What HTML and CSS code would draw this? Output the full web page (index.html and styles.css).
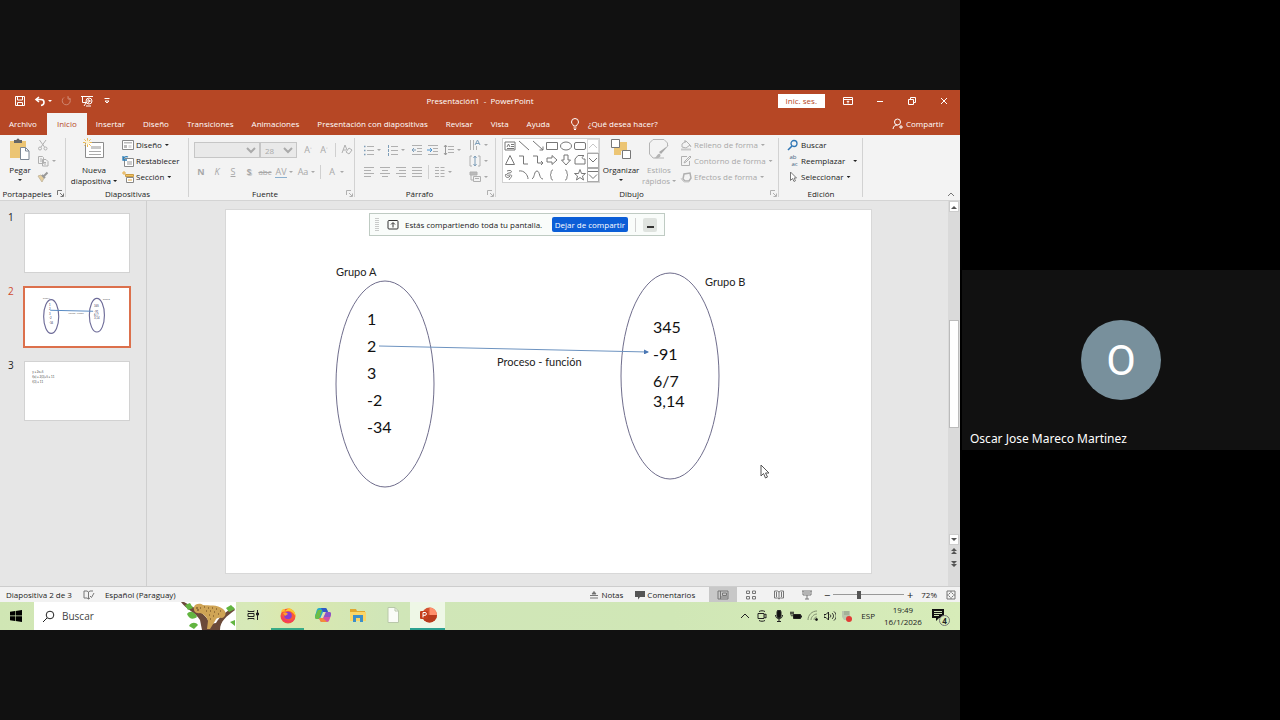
FILE: index.html
```html
<!DOCTYPE html>
<html lang="es">
<head>
<meta charset="utf-8">
<title>Presentación1 - PowerPoint</title>
<link rel="stylesheet" href="styles.css">
</head>
<body>
<main class="stage">
<div class="desktop">

<header class="titlebar">
  <div class="quick">
    <button aria-label="Guardar"><svg width="12" height="12" viewBox="0 0 12 12"><path d="M1.500 1.500h9v9h-9zM3.500 1.500v3.500h5V1.500M3.500 10.500V7.500h5v3" /></svg></button>
    <button aria-label="Deshacer"><svg width="12" height="12" viewBox="0 0 12 12"><path d="M5 2L2 4.500 5 7M2 4.500h5c4 0 4 5 0 6" stroke-width="1.600"/></svg></button>
    <i class="caret light"></i>
    <button aria-label="Rehacer" class="faded"><svg width="12" height="12" viewBox="0 0 12 12"><path d="M4 2.500a4 4 0 1 0 4.500 0M8 1v3h3"/></svg></button>
    <button aria-label="Presentación" class="show"><svg width="14" height="12" viewBox="0 0 14 12"><path d="M1 1.500h12M2.500 1.500v6h4M4 11l2-3"/><circle cx="9" cy="6" r="3"/><path d="M8 4.500l2.500 1.500L8 7.500zM6 11h5"/></svg></button>
    <button aria-label="Personalizar"><svg width="10" height="10" viewBox="0 0 10 10"><path d="M2.500 2.500h5M3 5h4L5 7z"/></svg></button>
  </div>
  <h1>Presentación1&nbsp; -&nbsp; PowerPoint</h1>
  <div class="window-tools">
    <button class="signin">Inic. ses.</button>
    <button aria-label="Opciones de cinta"><svg width="12" height="12" viewBox="0 0 12 12"><path d="M1.500 2.500h9v7h-9zM1.500 4.500h9M6 8.500V6M4.800 7L6 5.800 7.200 7"/></svg></button>
    <button aria-label="Minimizar"><svg width="12" height="12" viewBox="0 0 12 12"><path d="M3 6.500h6"/></svg></button>
    <button aria-label="Restaurar"><svg width="12" height="12" viewBox="0 0 12 12"><path d="M2.500 4.500h5v5h-5zM4.500 4.500v-2h5v5h-2"/></svg></button>
    <button aria-label="Cerrar"><svg width="12" height="12" viewBox="0 0 12 12"><path d="M3 3l6 6M9 3L3 9"/></svg></button>
  </div>
</header>

<nav class="tabs">
  <button>Archivo</button><button class="active">Inicio</button><button>Insertar</button><button>Diseño</button><button>Transiciones</button><button>Animaciones</button><button>Presentación con diapositivas</button><button>Revisar</button><button>Vista</button><button>Ayuda</button>
  <button class="tell"><svg width="10" height="12" viewBox="0 0 10 12"><path d="M3.500 8C3.500 6.500 1.500 6 1.500 4a3.500 3.500 0 0 1 7 0c0 2-2 2.500-2 4zM3.500 10h3M4 11.500h2"/></svg>¿Qué desea hacer?</button>
  <button class="share"><svg width="12" height="12" viewBox="0 0 12 12"><circle cx="5.500" cy="4" r="3"/><path d="M1 11c.5-3 2-4 4.500-4M9 7v4M7 9h4"/></svg>Compartir</button>
</nav>

<section class="ribbon">
  <div class="group g-clip">
    <div class="tools">
      <button class="big"><svg width="22" height="22" viewBox="0 0 22 22"><path d="M1 3h16v17H1z" fill="#ecc574"/><path d="M5 5V2h2.500a1.500 1.500 0 0 1 3 0H13v3z" fill="#666"/><path d="M11.500 9.500h5l3.500 3.500v8.500h-8.500z" fill="#fff" stroke="#7c8794"/><path d="M16.500 9.500V13H20" fill="none" stroke="#7c8794"/></svg><span>Pegar</span><i class="caret"></i></button>
      <div class="stack dim">
        <button aria-label="Cortar"><svg width="12" height="12" viewBox="0 0 12 12"><path d="M2.500 1l5 7M9 1L4 8"/><circle cx="3" cy="9.500" r="1.500"/><circle cx="8.500" cy="9.500" r="1.500"/></svg></button>
        <button aria-label="Copiar"><svg width="12" height="12" viewBox="0 0 12 12"><path d="M1.500 1.500h4l1 1v6h-5zM5.500 4.500h3.500l2 2v4.500H5.500zM3 4h2M3 6h2M7 7.500h2M7 9h2"/></svg><i class="caret"></i></button>
        <button aria-label="Copiar formato"><svg width="12" height="12" viewBox="0 0 12 12"><path d="M1 5l3-1 3 3-2 4z" fill="#e7cf9d" stroke="#c8bba2"/><path d="M5 4l3 3M7 5l3.500-3.500" stroke="#999" stroke-width="2"/></svg></button>
      </div>
    </div>
    <h2>Portapapeles</h2><button class="launcher" aria-label="Opciones de Portapapeles"><svg width="7" height="7" viewBox="0 0 7 7"><path d="M.5 5V.5H5M3 3l3 3M6.500 3.500v3h-3"/></svg></button>
  </div>

  <div class="group g-slides">
    <div class="tools">
      <button class="big"><svg width="22" height="22" viewBox="0 0 22 22"><path d="M2.500 4.500h18v15h-18z" fill="#fff" stroke="#8c8c8c"/><path d="M8 8h10v3H8z" fill="#c9c9c9"/><path d="M6 13.500h12M6 16.500h12" stroke="#aaa"/><path d="M4.500 0v9M0 4.500h9M1.300 1.300l6.400 6.400M7.700 1.300L1.300 7.700" stroke="#ebb954"/><circle cx="4.500" cy="4.500" r="2" fill="#fff3cf"/></svg><span>Nueva</span><span>diapositiva <i class="caret"></i></span></button>
      <div class="stack">
        <button><svg width="12" height="12" viewBox="0 0 12 12"><path d="M.5 1.500h11v9H.5z" fill="#fff" stroke="#888"/><path d="M2 3h8v1.500H2zM2 6h3v3H2z" fill="#bbb" stroke="none"/><path d="M6.500 6h3v3h-3z" fill="#ddd" stroke="none"/></svg>Diseño<i class="caret"></i></button>
        <button><svg width="12" height="12" viewBox="0 0 12 12"><path d="M2.500 3.500h9v8h-9z" fill="#fff" stroke="#888"/><path d="M5 6h5v4H5z" fill="#ccc" stroke="none"/><path d="M1 5C1 2 4 1 6 2M1 1v4h4" stroke="#2b7cb5" stroke-width="1.300"/></svg>Restablecer</button>
        <button><svg width="12" height="12" viewBox="0 0 12 12"><path d="M3.500 3.500h8v2h-8z" fill="#f0c15f" stroke="#c99b45"/><path d="M4.500 6.500h7v5h-7z" fill="#fff" stroke="#888"/><path d="M0 2h4M2 0v4M6 9h4" stroke="#e6ad45"/></svg>Sección<i class="caret"></i></button>
      </div>
    </div>
    <h2>Diapositivas</h2>
  </div>

  <div class="group g-font">
    <div class="rows dim">
      <div class="row">
        <select class="face" disabled aria-label="Fuente"><option></option></select><select class="size" disabled aria-label="Tamaño"><option>28</option></select>
        <button class="cell">A<sup>˄</sup></button><button class="cell">A<sup>˅</sup></button><i class="bar"></i>
        <button class="cell" aria-label="Borrar formato"><svg width="12" height="12" viewBox="0 0 12 12"><path d="M1 9l3-8 2 5M2 6h3M5 8l3-4 3 2-3 4z"/></svg></button>
      </div>
      <div class="row">
        <button class="cell"><b>N</b></button><button class="cell"><em>K</em></button><button class="cell"><u>S</u></button><button class="cell"><b class="shadow">S</b></button><button class="cell"><s>abc</s></button><button class="cell"><span class="spacing">AV</span></button><i class="caret"></i><button class="cell">Aa</button><i class="caret"></i><i class="bar"></i><button class="cell">A</button><i class="caret"></i>
      </div>
    </div>
    <h2>Fuente</h2><button class="launcher dim" aria-label="Opciones de Fuente"><svg width="7" height="7" viewBox="0 0 7 7"><path d="M.5 5V.5H5M3 3l3 3M6.500 3.500v3h-3"/></svg></button>
  </div>

  <div class="group g-par">
    <div class="tools dim">
      <div class="rows">
        <div class="row">
          <button class="cell" aria-label="Viñetas"><svg width="12" height="12" viewBox="0 0 12 12"><path d="M4 2.500h7M4 6.500h7M4 10.500h7"/><path d="M1 2.500h1.500M1 6.500h1.500M1 10.500h1.500" stroke="#7d9db8" stroke-width="1.500"/></svg></button><i class="caret"></i>
          <button class="cell" aria-label="Numeración"><svg width="12" height="12" viewBox="0 0 12 12"><path d="M4 2.500h7M4 6.500h7M4 10.500h7"/><path d="M1.500 1v3M1.500 5v3M1.500 9v3" stroke="#7d9db8"/></svg></button><i class="caret"></i>
          <button class="cell" aria-label="Reducir sangría"><svg width="12" height="12" viewBox="0 0 12 12"><path d="M1 1.500h10M6 4.500h5M6 7.500h5M1 10.500h10"/><path d="M5 6H1M3 4L1 6l2 2" stroke="#7d9db8"/></svg></button>
          <button class="cell" aria-label="Aumentar sangría"><svg width="12" height="12" viewBox="0 0 12 12"><path d="M1 1.500h10M6 4.500h5M6 7.500h5M1 10.500h10"/><path d="M0 6h4M3 4l2 2-2 2" stroke="#4e95cf"/></svg></button>
          <button class="cell" aria-label="Interlineado"><svg width="12" height="12" viewBox="0 0 12 12"><path d="M5 2.500h6M5 5.500h6M5 8.500h6"/><path d="M2.500 1v10M1 3l1.500-2L4 3M1 9l1.500 2L4 9" stroke="#999"/></svg></button><i class="caret"></i>
        </div>
        <div class="row">
          <button class="cell" aria-label="Izquierda"><svg width="12" height="12" viewBox="0 0 12 12"><path d="M1 1.500h10M1 4.500h7M1 7.500h10M1 10.500h7"/></svg></button>
          <button class="cell" aria-label="Centrar"><svg width="12" height="12" viewBox="0 0 12 12"><path d="M1 1.500h10M3 4.500h6M1 7.500h10M3 10.500h6"/></svg></button>
          <button class="cell" aria-label="Derecha"><svg width="12" height="12" viewBox="0 0 12 12"><path d="M1 1.500h10M4 4.500h7M1 7.500h10M4 10.500h7"/></svg></button>
          <button class="cell" aria-label="Justificar"><svg width="12" height="12" viewBox="0 0 12 12"><path d="M1 1.500h10M1 4.500h10M1 7.500h10M1 10.500h10"/></svg></button>
          <i class="bar"></i>
          <button class="cell" aria-label="Columnas"><svg width="12" height="12" viewBox="0 0 12 12"><path d="M1 1.500h4M1 4.500h4M1 7.500h4M1 10.500h4M6.500 1.500h4M6.500 4.500h4M6.500 7.500h4M6.500 10.500h4"/></svg></button><i class="caret"></i>
        </div>
      </div>
      <div class="stack">
        <button aria-label="Dirección del texto"><svg width="12" height="12" viewBox="0 0 12 12"><path d="M1.500 1v10M4.500 1v10M7.500 7v4"/><path d="M6 6l2.500-5L11 6M7 4.500h3" stroke="#7d9db8"/></svg><i class="caret"></i></button>
        <button aria-label="Alinear texto"><svg width="12" height="12" viewBox="0 0 12 12"><path d="M3 1H1v10h2M9 1h2v10H9"/><path d="M6 1v10M4.500 3L6 1l1.500 2M4.500 9L6 11l1.500-2" stroke="#7d9db8"/></svg><i class="caret"></i></button>
        <button aria-label="SmartArt"><svg width="12" height="12" viewBox="0 0 12 12"><path d="M1 1h7v3H1z" fill="#bbb"/><path d="M4.500 5.500h7v5h-7zM2 4v5h2M6 7.500h4"/></svg><i class="caret"></i></button>
      </div>
    </div>
    <h2>Párrafo</h2><button class="launcher dim" aria-label="Opciones de Párrafo"><svg width="7" height="7" viewBox="0 0 7 7"><path d="M.5 5V.5H5M3 3l3 3M6.500 3.500v3h-3"/></svg></button>
  </div>

  <div class="group g-draw">
    <div class="tools">
      <div class="gallery">
        <div class="shapes">
          <svg viewBox="0 0 14 14"><path d="M2 3h10v8H2zM4 8l1.500-3L7 8M8 5.500h3M8 7.500h3M4 9.500h7"/></svg>
          <svg viewBox="0 0 14 14"><path d="M2 2l10 9"/></svg>
          <svg viewBox="0 0 14 14"><path d="M2 2l10 9M12 7.500V11H8.500"/></svg>
          <svg viewBox="0 0 14 14"><path d="M1.500 3.500h11v7h-11z"/></svg>
          <svg viewBox="0 0 14 14"><ellipse cx="7" cy="7" rx="5.500" ry="4"/></svg>
          <svg viewBox="0 0 14 14"><rect x="1.500" y="3.500" width="11" height="7" rx="1.500"/></svg>
          <svg viewBox="0 0 14 14"><path d="M7 2.500l4.500 9h-9z"/></svg>
          <svg viewBox="0 0 14 14"><path d="M2 3h4.500v8H11"/></svg>
          <svg viewBox="0 0 14 14"><path d="M2 3h4.500v7H12M10 8l2 2-2 2"/></svg>
          <svg viewBox="0 0 14 14"><path d="M2 5h5V2.500L12 7l-5 4.500V9H2z"/></svg>
          <svg viewBox="0 0 14 14"><path d="M5 2h4v5h2.500L7 12 2.500 7H5z"/></svg>
          <svg viewBox="0 0 14 14"><path d="M2 11V6l3-3.500h6c-3 2-2 4 1 3.500v5z"/></svg>
          <svg viewBox="0 0 14 14"><path d="M4 3c5-2 6 2 2 2-4 1-3 3 1 2 4 0 0 3-1 5M3 6c-2 3 2 5 4 2"/></svg>
          <svg viewBox="0 0 14 14"><path d="M2 3c5-1 9 4 9 8"/></svg>
          <svg viewBox="0 0 14 14"><path d="M1 11C4 9 3 3 6 3s2 8 6 8"/></svg>
          <svg viewBox="0 0 14 14"><path d="M8 2C5 2 7 6 5 7c2 1 0 5 3 5"/></svg>
          <svg viewBox="0 0 14 14"><path d="M6 2c3 0 1 4 3 5-2 1 0 5-3 5"/></svg>
          <svg viewBox="0 0 14 14"><path d="M7 1.500l1.500 4h4L9.500 8l1 4L7 9.500 3.500 12l1-4-3-2.500h4z"/></svg>
        </div>
        <div class="scroll">
          <button aria-label="Subir" class="off"><svg width="10" height="8" viewBox="0 0 10 8"><path d="M1 6l4-4 4 4"/></svg></button>
          <button aria-label="Bajar"><svg width="10" height="8" viewBox="0 0 10 8"><path d="M1 2l4 4 4-4"/></svg></button>
          <button aria-label="Más"><svg width="10" height="10" viewBox="0 0 10 10"><path d="M0 1.500h10M1 4.500l4 4 4-4"/></svg></button>
        </div>
      </div>
      <button class="big"><svg width="22" height="22" viewBox="0 0 22 22"><path d="M8 4h9v9H8zM4 8h7v9H4z" fill="#ecc574"/><path d="M1.500 1.500h8v8h-8zM12.500 12.500h8v8h-8z" fill="#fff" stroke="#777"/></svg><span>Organizar</span><i class="caret"></i></button>
      <button class="big dim styles"><svg width="22" height="22" viewBox="0 0 22 22"><path d="M16 20H5L1.500 16V5L5 1.500h11L19.500 5v3" fill="none" stroke="#b5b5b5"/><path d="M21 7l-8 9-2-2z" fill="#aaa"/><path d="M6 20c3 0 3-5 6-4 2 3-2 5-6 4z" fill="#b5b5b5"/></svg><span>Estilos</span><span>rápidos <i class="caret"></i></span></button>
      <div class="stack dim">
        <button><svg width="12" height="12" viewBox="0 0 12 12"><path d="M2 5l4-3 4 4-4 3-4-1zM5 4V1M10 6l1 2" /><path d="M1 10.500h10" stroke="#c8c8c8" stroke-width="2"/></svg>Relleno de forma<i class="caret"></i></button>
        <button><svg width="12" height="12" viewBox="0 0 12 12"><path d="M7 1.500H1.500v9h8V6M4 8l1-2 5-5 1 1-5 5z"/></svg>Contorno de forma<i class="caret"></i></button>
        <button><svg width="12" height="12" viewBox="0 0 12 12"><path d="M3 8l1-5 6-1 1 5-2 3H5z" stroke-width="1.500"/><path d="M1 7l1 2 2 2h5" stroke="#ccc"/></svg>Efectos de forma<i class="caret"></i></button>
      </div>
    </div>
    <h2>Dibujo</h2><button class="launcher dim" aria-label="Opciones de Dibujo"><svg width="7" height="7" viewBox="0 0 7 7"><path d="M.5 5V.5H5M3 3l3 3M6.500 3.500v3h-3"/></svg></button>
  </div>

  <div class="group g-edit">
    <div class="tools">
      <div class="stack">
        <button><svg width="12" height="12" viewBox="0 0 12 12"><circle cx="7" cy="4.500" r="3" stroke="#2f76b5" stroke-width="1.300"/><path d="M5 7l-4 4" stroke="#2f76b5" stroke-width="1.600"/></svg>Buscar</button>
        <button><span class="abac"><b>ab</b><b>ac</b></span>Reemplazar<i class="caret wide"></i></button>
        <button><svg width="12" height="12" viewBox="0 0 12 12"><path d="M3.500 1v8.500l2-2 1.500 3 1.500-.8L7 7h2.500z" fill="#fff" stroke="#777"/></svg>Seleccionar<i class="caret"></i></button>
      </div>
    </div>
    <h2>Edición</h2>
  </div>
  <button class="collapse" aria-label="Contraer"><svg width="8" height="6" viewBox="0 0 8 6"><path d="M1 5l3-3 3 3"/></svg></button>
</section>

<section class="work">
  <aside class="thumbs">
    <div class="thumb"><span>1</span><div class="mini"></div></div>
    <div class="thumb selected"><span>2</span><div class="mini">
      <svg viewBox="0 0 647 365"><g fill="none" stroke="#6d6b98" stroke-width="7"><ellipse cx="166" cy="180" rx="46" ry="103"/><ellipse cx="445" cy="172" rx="46" ry="103"/></g><path d="M160 142l262 6" stroke="#5b8cc4" stroke-width="7"/><g class="mini-a"><text x="115" y="75">Grupo A</text><text x="480" y="82">Grupo B</text><text x="272" y="165">Proceso - función</text></g><g class="mini-b"><text x="152" y="116">1</text><text x="152" y="143">2</text><text x="152" y="170">3</text><text x="152" y="197">-2</text><text x="152" y="224">-34</text><text x="428" y="124">345</text><text x="428" y="156">-91</text><text x="428" y="178">6/7</text><text x="428" y="198">3,14</text></g></svg>
    </div></div>
    <div class="thumb"><span>3</span><div class="mini">
      <svg viewBox="0 0 647 365"><g class="mini-c"><text x="50" y="72">y = 2x+5</text><text x="50" y="106">f(x) = 2(3)+5 = 11</text><text x="50" y="133">f(3) = 11</text></g></svg>
    </div></div>
  </aside>
  <div class="editor">
    <svg class="slide" viewBox="0 0 647 365">
      <defs><marker id="tip" viewBox="0 0 5 5" refX="4" refY="2.500" markerWidth="5" markerHeight="5" orient="auto"><path d="M0 0l5 2.500L0 5z" fill="#4a77b4"/></marker></defs>
      <g fill="none" stroke="#6f6d8c" stroke-width="1"><ellipse cx="160" cy="175" rx="49" ry="103"/><ellipse cx="445" cy="167" rx="49" ry="103"/></g>
      <path d="M154 137L423 143" stroke="#6d93c0" stroke-width="1" marker-end="url(#tip)"/>
      <g class="label"><text x="111" y="67">Grupo A</text><text x="480" y="77">Grupo B</text><text x="272" y="157">Proceso - función</text></g>
      <g class="num"><text x="142" y="116">1</text><text x="142" y="143">2</text><text x="142" y="170">3</text><text x="142" y="197">-2</text><text x="142" y="224">-34</text>
      <text x="428" y="124">345</text><text x="428" y="151">-91</text><text x="428" y="178">6/7</text><text x="428" y="198">3,14</text></g>
    </svg>
  </div>
  <div class="vscroll">
    <button aria-label="Arriba"><svg width="6" height="4" viewBox="0 0 6 4"><path d="M0 4l3-3 3 3z"/></svg></button>
    <div class="track"><div class="thumb-bar"></div></div>
    <button aria-label="Abajo"><svg width="6" height="4" viewBox="0 0 6 4"><path d="M0 0l3 3 3-3z"/></svg></button>
    <button class="plain" aria-label="Diapositiva anterior"><svg width="6" height="7" viewBox="0 0 6 7"><path d="M0 3l3-3 3 3zM0 6l3-3 3 3z"/></svg></button>
    <button class="plain" aria-label="Diapositiva siguiente"><svg width="6" height="7" viewBox="0 0 6 7"><path d="M0 1l3 3 3-3zM0 4l3 3 3-3z"/></svg></button>
  </div>
</section>

<footer class="status">
  <span>Diapositiva 2 de 3</span>
  <button class="proof" aria-label="Revisión"><svg width="12" height="10" viewBox="0 0 12 10"><path d="M5.500 2L4 1H1v7h3l1.500 1L7 8M5.500 2v7M5.500 2L7 1h3M7 6l1.500 1.500L11 3"/></svg></button>
  <span class="lang">Español (Paraguay)</span>
  <button class="notes"><svg width="10" height="10" viewBox="0 0 10 10"><path d="M1 5.500h8M1 8h8"/><path d="M3 4l2-2.500L7 4z" fill="#666"/></svg>Notas</button>
  <button class="comments"><svg width="10" height="10" viewBox="0 0 10 10"><path d="M0 1h10v6H5L3 9.500V7H0z" fill="#555" stroke="none"/></svg>Comentarios</button>
  <button class="view on" aria-label="Normal"><svg width="12" height="10" viewBox="0 0 12 10"><path d="M1 1h10v8H1zM3.500 1v8M5.500 3h4v2.500h-4zM3.500 7h7"/></svg></button>
  <button class="view" aria-label="Clasificador"><svg width="12" height="10" viewBox="0 0 12 10"><path d="M1.500 1h3v2.500h-3zM7.500 1h3v2.500h-3zM1.500 6.500h3V9h-3zM7.500 6.500h3V9h-3z"/></svg></button>
  <button class="view" aria-label="Lectura"><svg width="12" height="10" viewBox="0 0 12 10"><path d="M6 2L4.500 1h-3v7h3L6 9l1.500-1h3V1h-3zM6 2v7M3.500 2v5M8.500 2v5"/></svg></button>
  <button class="view" aria-label="Presentación"><svg width="12" height="10" viewBox="0 0 12 10"><path d="M1 1h10M2 1v4h8V1M3 3h6M6 5v4M4 9h4"/></svg></button>
  <button class="zoom-step" aria-label="Alejar">−</button>
  <input type="range" min="0" max="100" value="36" aria-label="Zoom">
  <button class="zoom-step" aria-label="Acercar">+</button>
  <span class="percent">72%</span>
  <button class="fit" aria-label="Ajustar"><svg width="10" height="10" viewBox="0 0 10 10"><path d="M1 1h8v8H1zM5 1v2M5 7v2M1 5h2M7 5h2M3 3l1 1M7 3L6 4M3 7l1-1M7 7L6 6"/></svg></button>
</footer>

<footer class="taskbar">
  <button class="start" aria-label="Inicio"><svg width="12" height="12" viewBox="0 0 12 12"><path d="M0 1.700l5-.7v4.600H0zM5.600.9L12 0v5.600H5.600zM0 6.200h5v4.700l-5-.7zM5.600 6.200H12V12l-6.400-.9z"/></svg></button>
  <div class="search">
    <svg width="13" height="13" viewBox="0 0 13 13"><circle cx="8" cy="5" r="3.800"/><path d="M5 8l-4 4"/></svg>
    <input type="text" placeholder="Buscar" aria-label="Buscar">
    <svg class="leopard" width="56" height="28" viewBox="0 0 56 28"><path d="M1 0c5 7 14 10 19 18l2 10h18c0-9 7-14 15-20l-2-3c-7 5-13 9-17 16l-6 1c-3-8-9-13-26-22z" fill="#6b4a3a"/><path d="M7 12c3-4 8-2 10 3-4 3-8 2-10-3zM5 3l5-2 3 5-5 2zM46 6l5-3 4 4-6 3zM9 24c2-4 7-4 9-1l-4 4zM50 20l5-2v6z" fill="#62b540"/><path d="M14 5c1-4 7-4 9-2 6 1 14-1 20 4 4 3 3 8-1 9-4-1-6 0-7 3l-5 8h-3l1-8c-1-4-4-7-8-8-4 1-7-2-6-6z" fill="#cfa455"/><path d="M24 5h1M28 6h1M32 6h1M36 7h1M40 9h1M30 9h1M34 10h1M38 12h1M26 9h1M29 13h1M33 14h1M30 17h1" stroke="#8a6430" stroke-width="1.500"/><path d="M16 6h2M20 6h1M17 8h2" stroke="#5c4022"/></svg>
  </div>
  <button class="app" aria-label="Vista de tareas"><svg class="line" width="12" height="12" viewBox="0 0 12 12"><path d="M1 1.500v1h6v-1M1 4.500h6v3H1zM1 10.500v-1h6v1M10.500 1v10M9.500 4h2v2h-2z"/></svg></button>
  <button class="app run" aria-label="Firefox"><svg width="18" height="18" viewBox="0 0 18 18"><circle cx="9" cy="10" r="7.500" fill="#fa5a35"/><path d="M2 6C3 3 4 3 5 3l1 2 4-3c5 2 7 5 6.500 9C15 6 11 5 9 5z" fill="#ffc52e"/><path d="M2 9c0 9 12 10 14 3-2 3-8 4-11 0z" fill="#f13b63"/><circle cx="9" cy="9.500" r="3.800" fill="#8a3bd1"/><path d="M4 7c3-1 4 0 5 1l-3 2z" fill="#ff9f2c"/></svg></button>
  <button class="app" aria-label="Copilot"><svg width="18" height="18" viewBox="0 0 18 18"><path d="M5 2h6c2 0 2 2 3 4H9L6 13H3c-3 0-2-4-1-6 .5-2 1-5 3-5z" fill="#25a9c7"/><path d="M2 8c1-2 1-3 2-4h4L5 13H3c-3 0-2-3-1-5z" fill="#6cbd45"/><path d="M7 2h4c2 0 2 2 3 4H9z" fill="#3157c6"/><path d="M13 16H8c-2 0-2-2-3-4h4l3-6h3c3 0 2 4 1 6-.6 2-1 4-3 4z" fill="#d152a8"/><path d="M13 16H8c-2 0-2-2-3-4h4z" fill="#f38b39"/><path d="M12 6h3c3 0 2 3 1 5h-6z" fill="#8657c9"/></svg></button>
  <button class="app" aria-label="Explorador"><svg width="18" height="18" viewBox="0 0 18 18"><path d="M1 3h6l1 2h8v10H1z" fill="#e2a72f"/><path d="M1 6h16v9H1z" fill="#fbd667"/><path d="M4 9h10v7h-3v-4H7v4H4z" fill="#3d8fc9"/></svg></button>
  <button class="app" aria-label="Documento"><svg width="18" height="18" viewBox="0 0 18 18"><path d="M4 1.500h7L14.500 5v11.500H4z" fill="#fafcf7" stroke="#b9c8aa"/><path d="M11 1.500V5h3.500" fill="none" stroke="#b9c8aa"/></svg></button>
  <button class="app current" aria-label="PowerPoint"><svg width="18" height="18" viewBox="0 0 18 18"><circle cx="10.500" cy="9" r="7.500" fill="#d35230"/><path d="M10.500 1.500a7.500 7.500 0 0 1 7.500 7.500h-7.500z" fill="#ff8f6b"/><path d="M3 9h15a7.500 7.500 0 0 1-15 0z" fill="#b83b1d"/><rect x="1" y="5" width="8" height="8" rx="1" fill="#c43e1c"/><path d="M4 11.500v-5h2a1.300 1.300 0 0 1 0 2.800H4" fill="none" stroke="#fff"/></svg></button>
  <div class="tray">
    <button aria-label="Iconos ocultos"><svg class="line" width="12" height="12" viewBox="0 0 12 12"><path d="M2 8l4-4 4 4"/></svg></button>
    <button aria-label="Cámara"><svg class="line" width="12" height="12" viewBox="0 0 12 12"><path d="M2 3.500h6v5H2zM8 5l2-1v4L8 7M3 1.500c2-1 4-1 6 0M3 10.500c2 1 4 1 6 0"/></svg></button>
    <button aria-label="Micrófono"><svg class="line" width="12" height="12" viewBox="0 0 12 12"><rect x="4" y="0" width="4" height="8" rx="2" fill="#111"/><path d="M2.500 5c0 5 7 5 7 0M6 9v2.500M4 11.500h4"/></svg></button>
    <button aria-label="Batería"><svg class="line" width="12" height="12" viewBox="0 0 12 12"><path d="M3.500 4.500h7v4h-7z" fill="#111"/><path d="M11.500 5.500v2M0 3h4M1 1.500v3c0 2 2 2 2 0v-3"/></svg></button>
    <button aria-label="Red"><svg class="line" width="12" height="12" viewBox="0 0 12 12"><path d="M1 10C1 5 5 1 10 1M4 10c0-3 3-6 6-6M7 10c0-2 1-3 3-3" stroke="#829071"/><circle cx="9.500" cy="9.500" r="1" fill="#111"/></svg></button>
    <button aria-label="Volumen"><svg class="line" width="12" height="12" viewBox="0 0 12 12"><path d="M0 4.500h2l2.500-2.500v8L2 7.500H0zM6 4.500c1 1 1 2 0 3M8 3c2 2 2 4 0 6M10 1.500c3 3 3 6 0 9"/></svg></button>
    <button class="guard" aria-label="Grabando"><svg width="12" height="12" viewBox="0 0 12 12"><path d="M1 1h8v9H3L1 7z" fill="#b9c6ad"/><path d="M3 2h5M3 4h5" stroke="#8e9d84"/><circle cx="8" cy="9" r="3" fill="#e23b35"/></svg></button>
    <span class="esp">ESP</span>
    <div class="clock"><time>19:49</time><time>16/1/2026</time></div>
    <button class="alerts" aria-label="Notificaciones"><svg width="18" height="18" viewBox="0 0 18 18"><path d="M1 2h12v9H8l-3 3v-3H1z" fill="#111"/><path d="M3 4.500h8M3 6.500h8M3 8.500h5" stroke="#cfe2b5"/></svg><b>4</b></button>
  </div>
</footer>

<div class="sharing">
  <svg class="grip" width="4" height="14" viewBox="0 0 4 14"><path d="M1 0v14M3 0v14" stroke="#999" stroke-dasharray="1 1"/></svg>
  <svg width="12" height="12" viewBox="0 0 12 12"><rect x="1" y="1.500" width="10" height="8.500" rx="1"/><path d="M6 8.500V4M4 5.500L6 3.500l2 2"/></svg>
  <span>Estás compartiendo toda tu pantalla.</span>
  <button class="stop">Dejar de compartir</button>
  <i class="bar"></i>
  <button class="hide" aria-label="Ocultar"></button>
</div>
<svg class="cursor" width="10" height="15" viewBox="0 0 10 15"><path d="M1 1v11l2.500-2.500L5.500 14l2-1-2-4H9z" fill="#fff" stroke="#555"/></svg>
</div>
</main>

<aside class="people">
  <article class="tile"><div class="avatar">O</div><p>Oscar Jose Mareco Martinez</p></article>
</aside>
</body>
</html>
```
FILE: styles.css
```css
* { box-sizing: border-box; }
body {
  margin: 0;
  min-height: 100vh;
  display: grid;
  grid-template-columns: 3fr 1fr;
  background: #000;
  font-family: "Open Sans", "Noto Sans", sans-serif;
}
button, input, select { font: inherit; color: inherit; }
button { border: 0; padding: 0; background: none; display: flex; align-items: center; white-space: nowrap; }
svg { display: block; flex: none; }
h1, h2, p { margin: 0; font-weight: 400; }
i { font-style: normal; }

.stage { background: #111; display: flex; align-items: center; }
.desktop {
  position: relative;
  width: 100%;
  aspect-ratio: 16 / 9;
  display: flex;
  flex-direction: column;
  background: #e6e6e6;
  color: #222;
  font-size: 8px;
  line-height: 10px;
}
.caret {
  display: inline-block;
  flex: none;
  width: 4px;
  height: 2px;
  margin-left: 3px;
  background: currentColor;
  clip-path: polygon(0 0, 100% 0, 50% 100%);
}
.bar { width: 1px; height: 14px; background: #d0d0d0; }

/* Title bar and tabs */
.titlebar {
  height: 22px;
  display: grid;
  grid-template-columns: 1fr auto 1fr;
  align-items: center;
  background: #b64725;
  color: #fff;
}
.titlebar h1 { font-size: 8px; }
.titlebar svg, .tabs svg { fill: none; stroke: #fff; }
.quick { display: flex; align-items: center; gap: 8px; padding-left: 14px; }
.quick .light { margin-left: -6px; }
.faded { opacity: .35; }
.window-tools { display: flex; align-items: center; justify-content: flex-end; gap: 20px; padding-right: 10px; }
.signin { background: #fff; color: #b64725; padding: 0 8px; margin-right: -3px; height: 14px; }
.tabs { height: 23px; display: flex; background: #b64725; color: #fff; }
.tabs button { padding: 0 9px; }
.tabs .active { background: linear-gradient(#b64725 1px, #f3f3f3 1px); color: #b64725; padding: 0 10px; margin-left: 1px; }
.tabs .tell { gap: 8px; padding-left: 11px; }
.tabs .share { margin-left: auto; gap: 2px; padding-right: 16px; }

/* Ribbon */
.ribbon { height: 65px; display: flex; background: #f3f3f3; }
.group { position: relative; display: flex; flex-direction: column; }
.group::after { content: ""; position: absolute; right: 0; top: 3px; bottom: 3px; width: 1px; background: #d2d2d2; }
.group h2 { font-size: 8px; line-height: 13px; margin-top: 2px; text-align: center; }
.g-clip { width: 66px; }
.g-clip h2 { padding-right: 12px; }
.g-slides { width: 123px; }
.g-font { width: 166px; }
.g-font h2 { padding-right: 14px; }
.g-par { width: 141px; }
.g-par h2 { padding-right: 12px; }
.g-draw { width: 283px; }
.g-draw h2 { padding-right: 12px; }
.g-edit { width: 84px; }
.launcher { position: absolute; right: 2px; bottom: 3px; }
.ribbon svg { fill: none; stroke: #777; }
.ribbon .big svg { stroke: none; }
.tools { display: flex; height: 50px; padding-top: 2px; }
.big { flex-direction: column; line-height: 11px; padding-top: 1px; }
.big svg { margin-bottom: 4px; }
.big > .caret { margin: 4px 0 0; }
.big span .caret { margin: 0 0 2px; }
.stack { display: flex; flex-direction: column; }
.stack button { height: 16px; gap: 2px; }
.stack .caret { margin-left: 1px; }
.stack .wide { margin-left: 6px; }
.ribbon .dim { color: #a8a8a8; }
.ribbon .dim svg { stroke: #b0b0b0; }
.ribbon .styles svg { stroke: none; }
.g-clip .big { width: 34px; margin-left: 3px; }
.g-slides .big { width: 52px; margin: 0 2px; }
.rows { height: 50px; padding: 5px 0 0 4px; display: flex; flex-direction: column; gap: 2px; }
.row { display: flex; align-items: center; height: 20px; }
.cell { width: 16px; justify-content: center; }
.row .caret { margin: 0 2px 0 0; }
.row sup { font-size: 6px; line-height: 6px; }
.row .bar { margin: 0 3px; }
.g-font .row { font-size: 9px; }
.g-font s { font-size: 8px; }
.shadow { text-shadow: 1px 1px #ccc; }
.spacing { border-bottom: 1px solid #8bb0cf; }
.row select {
  height: 16px;
  border: 1px solid #c6c6c6;
  background: #e9e9e9;
  color: #aaa;
  opacity: 1;
  font-size: 8px;
  border-radius: 0;
  padding: 0;
}
.row .face { width: 66px; margin-left: 1px; }
.row .size { width: 37px; margin-right: 3px; }
.g-par .rows { width: 114px; padding: 3px 0 0 6px; }
.g-par .row:first-child .caret { margin: 0 4px 0 0; }
.gallery { display: flex; height: 45px; margin: 1px 3px 0 6px; border: 1px solid #d0d0d0; background: #fff; }
.shapes { display: grid; grid-template-columns: repeat(6, 14px); align-items: center; }
.shapes svg { width: 14px; height: 14px; }
.scroll { width: 12px; display: grid; grid-template-rows: repeat(3, 1fr); }
.scroll button { justify-content: center; border: 1px solid #aaa; }
.scroll .off { opacity: .4; }
.g-draw .big { width: 36px; }
.g-draw .styles { margin: 0 3px 0 2px; }
.g-edit .tools { padding-left: 8px; }
.abac { width: 12px; display: flex; flex-direction: column; font-size: 6px; line-height: 7px; color: #44617c; }
.abac b { font-weight: 400; }
.abac b + b { padding-left: 3px; }
.collapse { margin: auto 5px 3px auto; }

/* Slides */
.work { flex: 1; min-height: 0; display: flex; border-top: 1px solid #d4d4d4; }
.thumbs { width: 147px; padding-top: 12px; border-right: 1px solid #cfcfcf; display: flex; flex-direction: column; gap: 14px; }
.thumb { display: flex; line-height: 8px; }
.thumb span { width: 24px; padding-left: 8px; font-size: 10px; }
.mini { width: 106px; height: 60px; background: #fff; outline: 1px solid #d2d2d2; outline-offset: -1px; }
.selected span { color: #cf4b2e; }
.selected .mini { outline: 2px solid #dc704c; outline-offset: -1px; }
.mini-a { font: 12px Lato, sans-serif; fill: #555; }
.mini-b { font: 17px Lato, sans-serif; fill: #335; }
.mini-c { font: 18px Lato, sans-serif; fill: #444; }
.editor { flex: 1; padding: 8px 76px 0 78px; }
.slide { width: 100%; background: #fff; outline: 1px solid #d8d8d8; outline-offset: -1px; }
.label { font: 11px Lato, sans-serif; fill: #222; }
.num { font: 16px Lato, sans-serif; fill: #111; }
.vscroll { width: 12px; display: flex; flex-direction: column; background: #dadada; padding-bottom: 17px; }
.vscroll button { height: 11px; margin: 0 1px; justify-content: center; background: #fff; border: 1px solid #ccc; }
.vscroll .plain { background: none; border: 0; height: 12px; }
.vscroll svg { fill: #555; }
.track { flex: 1; padding: 108px 1px 0; }
.thumb-bar { height: 108px; background: #fff; border: 1px solid #bbb; }

/* Status bar */
.status { height: 16px; display: flex; align-items: center; background: #f2f2f2; border-top: 1px solid #cdcdcd; padding: 0 4px 0 6px; }
.status svg { fill: none; stroke: #777; }
.proof { margin: 0 10px 0 11px; }
.notes, .comments { gap: 2px; }
.notes { margin-left: auto; }
.comments { margin: 0 14px 0 12px; }
.view { width: 28px; height: 15px; justify-content: center; }
.view.on { background: #c8c8c8; }
.zoom-step { width: 12px; justify-content: center; font-size: 11px; }
.status input { appearance: none; width: 71px; height: 10px; margin: 0; background: linear-gradient(#999, #999) center / 100% 1px no-repeat; }
.status input::-webkit-slider-thumb { appearance: none; width: 4px; height: 8px; background: #555; }
.percent { margin: 0 9px 0 5px; }

/* Taskbar */
.taskbar { height: 28px; display: flex; background: linear-gradient(90deg, #d0e6b4, #d7e9b8 26%, #dbe8ae 30%, #d0e6b8 40%, #d0e7b6 70%, #d7ecb9); }
.start { width: 34px; padding-left: 10px; }
.search { width: 202px; display: flex; align-items: center; gap: 7px; padding-left: 8px; background: #fff; margin-right: -1px; }
.search > svg:first-child, .line { fill: none; stroke: #222; }
.search input { flex: 1; width: 0; border: 0; padding: 0; font-size: 10px; background: none; }
.search input::placeholder { color: #444; opacity: 1; }
.leopard { fill: none; }
.app { width: 35px; justify-content: center; border-bottom: 2px solid transparent; }
.run { border-image: linear-gradient(90deg, transparent 8%, #39ab87 8% 92%, transparent 92%) 2; }
.current { background: #eef7e6; border-bottom-color: #2ba191; }
.tray { margin-left: auto; display: flex; align-items: center; gap: 5px; padding-right: 11px; }
.esp { margin: 0 2px 0 3px; }
.clock { display: flex; flex-direction: column; gap: 2px; width: 42px; text-align: center; }
.alerts { position: relative; margin-left: 2px; }
.alerts b { position: absolute; right: -1px; bottom: -1px; width: 11px; height: 11px; border: 1px solid #777; border-radius: 50%; background: #d7ecb9; font-size: 8px; line-height: 9px; text-align: center; }

/* Overlays on the shared screen */
.sharing {
  position: absolute;
  left: 369px;
  top: 123px;
  width: 296px;
  height: 23px;
  display: flex;
  align-items: center;
  border: 1px solid #bfcbc3;
  background: #f9fcfa;
  padding-left: 5px;
  color: #222;
}
.sharing svg { fill: none; stroke: #333; }
.grip { margin-right: 8px; }
.sharing span { margin: 0 auto 0 6px; white-space: nowrap; }
.stop { height: 15px; padding: 0 3px; border-radius: 2px; background: #0b5ed7; color: #fff; }
.sharing .bar { margin: 0 7px; }
.hide { width: 14px; height: 14px; margin-right: 7px; border-radius: 2px; background: #dfe3df; }
.hide::after { content: ""; width: 7px; height: 2px; margin: 5px auto 0; background: #333; }
.cursor { position: absolute; left: 760px; top: 374px; }

/* Participants */
.people { display: flex; align-items: center; padding-left: 2px; }
.tile { flex: 1; aspect-ratio: 318 / 180; position: relative; display: flex; align-items: center; justify-content: center; background: #111; color: #fff; }
.avatar { width: 80px; height: 80px; border-radius: 50%; display: flex; align-items: center; justify-content: center; background: #78909c; font: 43px Roboto, sans-serif; }
.tile p { position: absolute; left: 8px; bottom: 3px; font: 12px/16px "Noto Sans", sans-serif; }
```
